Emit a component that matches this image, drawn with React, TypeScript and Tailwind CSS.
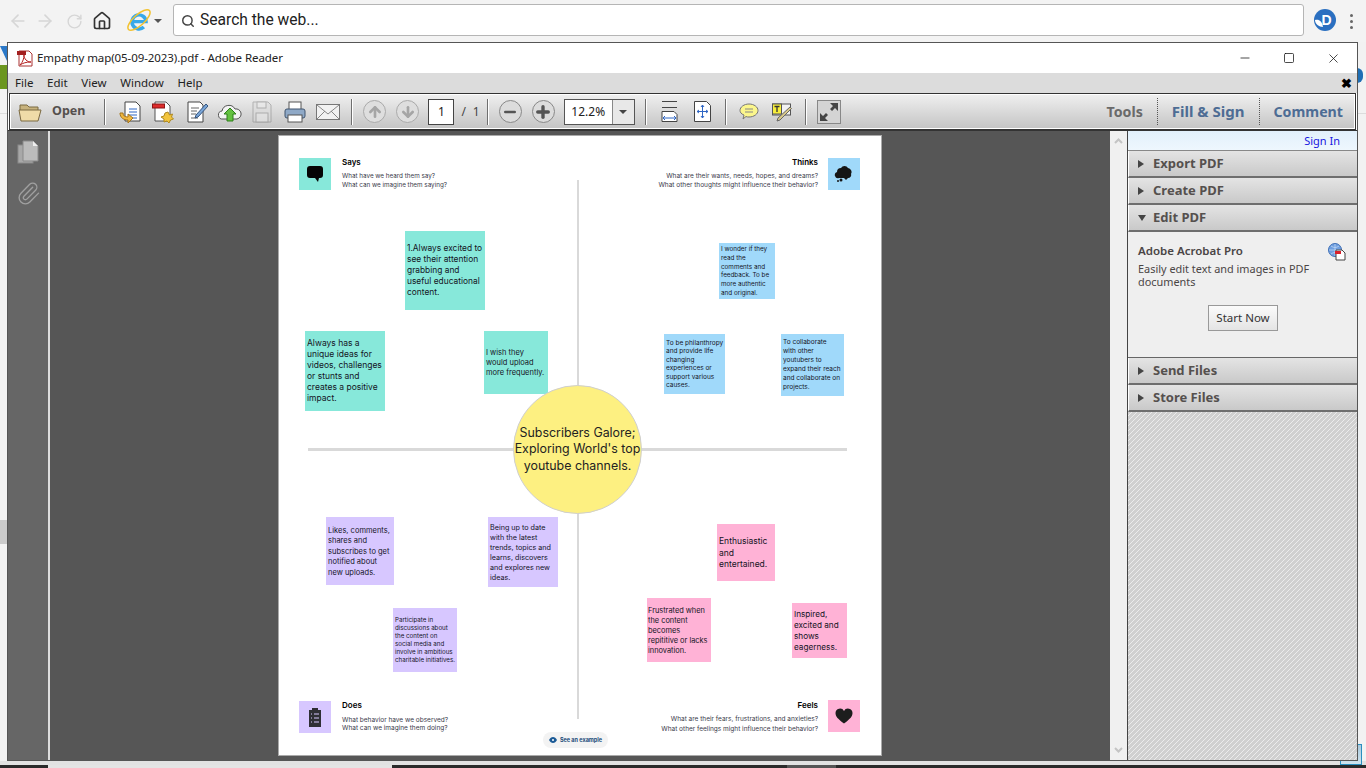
import { ArrowLeft, ArrowRight, RotateCw, Home, Search, Minus, Plus, ArrowUp, ArrowDown, Paperclip, X, Square } from "lucide-react"

const ui = "font-['Noto_Sans',sans-serif]"
const doc = "font-['Inter',sans-serif]"
const hdr = "bg-gradient-to-b from-[#e4e4e4] to-[#c9c9c9]"

const Sep = ({ cls }: { cls: string }) => <div className={`w-[2px] h-[26px] shrink-0 border-l border-[#6f6f6f] border-r-0 bg-white ${cls}`} />

const Note = ({ x, y, w, h, cls, text, pad }: { x: number, y: number, w: number, h: number, cls: string, text: string[], pad: string }) => (
    <div className={`absolute ${pad} ${cls} text-[#14141f] whitespace-nowrap`} style={{ left: x, top: y, width: w, height: h }}>
        {text.map(t => <div key={t}>{t}</div>)}
    </div>
)

const Header = ({ title, open }: { title: string, open?: boolean }) => (
    <div className={`h-[27px] shrink-0 flex items-center pl-[9px] border-b-2 border-[#6e6e6e] border-l border-l-white ${hdr}`}>
        {open
            ? <div className="w-0 h-0 border-l-[4px] border-r-[4px] border-t-[6px] border-l-transparent border-r-transparent border-t-[#444]" />
            : <div className="w-0 h-0 border-t-[4px] border-b-[4px] border-l-[6px] border-t-transparent border-b-transparent border-l-[#444]" />}
        <span className={`${open ? "ml-[7px]" : "ml-[9px]"} text-[13px] font-bold text-[#55504e]`}>{title}</span>
    </div>
)

const Toolbar = () => (
    <div className="h-[37px] shrink-0 mx-px flex items-center border border-[#333] outline outline-white -outline-offset-2 bg-gradient-to-b from-[#f0f0f0] to-[#c4c4c4] pl-[8px]">
        <svg width="24" height="20" viewBox="0 0 24 20" className="shrink-0">
            <path d="M2 3h7l2 2h9v4H2z" fill="#c7b27d" stroke="#7b6a42" />
            <path d="M1 8h22l-3 11H3z" fill="#efdca8" stroke="#7b6a42" />
        </svg>
        <span className="ml-[10px] text-[12.5px] font-bold text-[#55504e]">Open</span>
        <Sep cls="ml-[19px]" />
        <svg width="22" height="24" viewBox="0 0 22 24" className="ml-[13px] shrink-0">
            <path d="M6 2h11l4 4v15H6z" fill="#fff" stroke="#444" />
            <path d="M10 9h8M10 12h8M10 15h8M10 18h8" stroke="#2f66c4" />
            <path d="M1 13c0 5 4 7 8 7v3l5-5-5-4v3c-3 0-5-1-5-4z" fill="#f0b73e" stroke="#a5741a" />
        </svg>
        <svg width="22" height="24" viewBox="0 0 22 24" className="ml-[11px] shrink-0">
            <path d="M3 2h11l4 4v15H3z" fill="#fff" stroke="#555" />
            <rect x="0.500" y="4" width="12" height="4" fill="#dd2b2b" stroke="#8a1515" />
            <path d="M16 12l1.500 3 3-1-1 3 2 2-3 1-1.500 3-2-2-3 1 0-3-3-2 3-1 1-3z" fill="#f2c43d" stroke="#b08a20" />
        </svg>
        <svg width="21" height="24" viewBox="0 0 21 24" className="ml-[13px] shrink-0">
            <path d="M1 2h12l3 3v17H1z" fill="#fff" stroke="#444" />
            <path d="M4 8h8M4 11h6M4 14h5M4 18h7" stroke="#666" />
            <path d="M19 4l2 2-10 11-3 1 1-3z" fill="#7aa6d8" stroke="#36557e" />
        </svg>
        <svg width="25" height="24" viewBox="0 0 25 24" className="ml-[9px] shrink-0">
            <path d="M6 19a4 4 0 0 1-1-8 7 7 0 0 1 13-2 5 5 0 0 1 2 10z" fill="#f4f4f4" stroke="#555" />
            <path d="M13 8l6 6h-3v7h-6v-7H7z" fill="#63c140" stroke="#2e7f1b" />
        </svg>
        <svg width="20" height="22" viewBox="0 0 20 22" opacity="0.45" className="ml-[10px] shrink-0">
            <path d="M1 1h15l3 3v17H1z" fill="#ddd" stroke="#777" />
            <rect x="5" y="1" width="9" height="6" fill="#eee" stroke="#777" />
            <rect x="4" y="12" width="12" height="9" fill="#eee" stroke="#777" />
        </svg>
        <svg width="22" height="24" viewBox="0 0 22 24" className="ml-[12px] shrink-0">
            <rect x="5" y="2" width="12" height="8" fill="#fff" stroke="#555" />
            <rect x="1" y="9" width="20" height="9" rx="2" fill="#8fa9c7" stroke="#40556f" />
            <rect x="4" y="15" width="14" height="7" fill="#fff" stroke="#555" />
        </svg>
        <svg width="24" height="18" viewBox="0 0 24 18" className="ml-[10px] shrink-0">
            <rect x="0.500" y="1.500" width="23" height="15" fill="#f2f2f2" stroke="#777" />
            <path d="M1 2l11 9 11-9M1 16l8-8M23 16l-8-8" fill="none" stroke="#888" />
        </svg>
        <Sep cls="ml-[11px]" />
        <div className="ml-[10px] w-[23px] h-[23px] shrink-0 rounded-full border border-[#aaa] bg-[#dedede] flex items-center justify-center">
            <ArrowUp size={16} strokeWidth={4} className="text-[#a5a5a5]" />
        </div>
        <div className="ml-[10px] w-[23px] h-[23px] shrink-0 rounded-full border border-[#aaa] bg-[#dedede] flex items-center justify-center">
            <ArrowDown size={16} strokeWidth={4} className="text-[#a5a5a5]" />
        </div>
        <div className="ml-[9px] w-[26px] h-[26px] shrink-0 bg-white border border-[#444] text-center text-[12px] leading-[24px] text-[#222]">1</div>
        <span className="ml-[7px] text-[12px] text-[#444]">/</span>
        <span className="ml-[7px] text-[12px] text-[#444]">1</span>
        <Sep cls="ml-[7px]" />
        <div className="ml-[10px] w-[23px] h-[23px] shrink-0 rounded-full border border-[#888] bg-[#dcdcdc] flex items-center justify-center">
            <Minus size={16} strokeWidth={4} className="text-[#555]" />
        </div>
        <div className="ml-[10px] w-[23px] h-[23px] shrink-0 rounded-full border border-[#888] bg-[#dcdcdc] flex items-center justify-center">
            <Plus size={18} strokeWidth={4.5} className="text-[#555]" />
        </div>
        <div className="ml-[9px] w-[71px] h-[26px] shrink-0 bg-white border border-[#555] flex">
            <span className="w-[47px] text-center text-[12px] leading-[24px] text-[#222]">12.2%</span>
            <div className="flex-1 border-l border-[#888] bg-[#e8e8e8] flex items-center justify-center">
                <div className="w-0 h-0 border-l-[4px] border-r-[4px] border-t-[4px] border-l-transparent border-r-transparent border-t-[#444]" />
            </div>
        </div>
        <Sep cls="ml-[10px]" />
        <svg width="17" height="21" viewBox="0 0 17 21" className="ml-[14px] shrink-0">
            <rect x="1" y="0.500" width="15" height="6" fill="#e4e4e4" />
            <path d="M1 0.500h15M1 6.500h15" stroke="#444" fill="none" />
            <path d="M1 10.500h12l3 3v7H1z" fill="#fff" stroke="#444" />
            <path d="M2 17h13M4 15l-2 2 2 2M13 15l2 2-2 2" stroke="#2f66c4" fill="none" />
        </svg>
        <svg width="17" height="21" viewBox="0 0 17 21" className="ml-[16px] shrink-0">
            <path d="M0.500 0.500h12l4 4v16H0.500z" fill="#fff" stroke="#444" />
            <path d="M8.500 4v13M3 10.500h11M7 6l1.500-2 1.500 2M7 15l1.500 2 1.500-2M5 9l-2 1.500 2 1.500M12 9l2 1.500-2 1.500" stroke="#2f66c4" fill="none" />
        </svg>
        <Sep cls="ml-[14px]" />
        <svg width="20" height="18" viewBox="0 0 20 18" className="ml-[12px] shrink-0">
            <path d="M10 1c5 0 9 3 9 6.500S15 14 10 14c-1 0-2 0-3-.5L4 16l1-4C2 11 1 9 1 7.500 1 4 5 1 10 1z" fill="#fbf68c" stroke="#777" />
            <path d="M6 6h8M6 9h8" stroke="#888" />
        </svg>
        <svg width="20" height="20" viewBox="0 0 20 20" className="ml-[13px] shrink-0">
            <rect x="0.500" y="2" width="18" height="11" fill="#f2f2f2" stroke="#555" />
            <rect x="0.500" y="2" width="9" height="10" fill="#f7ee3b" stroke="#555" />
            <path d="M2.500 4.500h5M5 4.500v5.500" stroke="#333" strokeWidth="1.300" />
            <path d="M18 5l1.500 1.500L8 18l-3 1 1-3z" fill="#d8c98a" stroke="#666" />
        </svg>
        <Sep cls="ml-[13px]" />
        <div className="ml-[10px] w-[24px] h-[24px] shrink-0 bg-[#d4d4d4] border border-[#888] flex items-center justify-center">
            <svg width="20" height="20" viewBox="0 0 20 20">
                <path d="M19 1v8l-3-3-3 3-2-2 3-3-3-3z" fill="#444" />
                <path d="M1 19v-8l3 3 3-3 2 2-3 3 3 3z" fill="#444" />
            </svg>
        </div>
        <div className="ml-auto flex items-center h-full font-bold">
            <span className="text-[#6a6a6a] text-[14.2px] pr-[14px]">Tools</span>
            <div className="h-[27px] border-l border-dotted border-[#555]" />
            <span className="text-[#4d6c94] text-[15px] px-[14px]">Fill & Sign</span>
            <div className="h-[27px] border-l border-dotted border-[#555]" />
            <span className="text-[#4d6c94] text-[14.2px] pl-[14px] pr-[12px]">Comment</span>
        </div>
    </div>
)

const PdfPage = () => (
    <div className={`absolute left-[228px] top-[4px] w-[604px] h-[621px] bg-white border border-[#aaa] ${doc}`}>
        {/* page is a free canvas, offsets are relative to its top left */}
        <div className="absolute left-[298px] top-[44px] w-[2px] h-[539px] bg-[#d9d9d9]" />
        <div className="absolute left-[29px] top-[312px] w-[539px] h-[3px] bg-[#d9d9d9]" />

        <div className="absolute left-[20px] top-[22px] w-[32px] h-[32px] bg-[#87e8da] flex items-center justify-center">
            <svg width="18" height="18" viewBox="0 0 18 18"><path d="M4 1h10c2 0 3 1 3 3v6c0 2-1 3-3 3h-1l-1 4-3-4H4c-2 0-3-1-3-3V4c0-2 1-3 3-3z" fill="#050505" /></svg>
        </div>
        <div className="absolute left-[63px] top-[20px] text-[8px] font-semibold text-black">Says</div>
        <div className="absolute left-[63px] top-[36px] text-[6.3px] leading-[9px] text-[#3a3a4a] whitespace-nowrap">What have we heard them say?<br />What can we imagine them saying?</div>

        <div className="absolute right-[63px] top-[20px] text-[8px] font-semibold text-black">Thinks</div>
        <div className="absolute right-[63px] top-[36px] text-[6.5px] leading-[9px] text-[#3a3a4a] text-right whitespace-nowrap">What are their wants, needs, hopes, and dreams?<br />What other thoughts might influence their behavior?</div>
        <div className="absolute left-[549px] top-[22px] w-[32px] h-[32px] bg-[#a0d9fa] flex items-center justify-center">
            <svg width="20" height="20" viewBox="0 0 20 20"><path d="M5 14a3 3 0 0 1-2-6 4 4 0 0 1 4-4 4 4 0 0 1 7 0 4 4 0 0 1 3 6 3 3 0 0 1-3 4l-2 2-2-2z" fill="#151515" /><circle cx="4" cy="17" r="1" fill="#151515" /><circle cx="7" cy="16" r="1.500" fill="#151515" /></svg>
        </div>

        <div className="absolute left-[20px] top-[565px] w-[32px] h-[32px] bg-[#d7c7ff] flex items-center justify-center">
            <svg width="14" height="20" viewBox="0 0 14 20"><path d="M1 3h3V1h6v2h3v17H1z" fill="#2f2f35" /><path d="M3 7h1M6 7h5M3 11h1M6 11h5M3 15h1M6 15h5" stroke="#d7c7ff" /></svg>
        </div>
        <div className="absolute left-[63px] top-[563px] text-[8px] font-semibold text-black">Does</div>
        <div className="absolute left-[63px] top-[580px] text-[6.5px] leading-[8px] text-[#3a3a4a] whitespace-nowrap">What behavior have we observed?<br />What can we imagine them doing?</div>

        <div className="absolute right-[63px] top-[563px] text-[8px] font-semibold text-black">Feels</div>
        <div className="absolute right-[63px] top-[578px] text-[6.5px] leading-[10px] text-[#3a3a4a] text-right whitespace-nowrap">What are their fears, frustrations, and anxieties?<br />What other feelings might influence their behavior?</div>
        <div className="absolute left-[549px] top-[564px] w-[32px] h-[32px] bg-[#ffb2d6] flex items-center justify-center">
            <svg width="18" height="16" viewBox="0 0 18 16"><path d="M9 15.500C3 11 0.500 8.500 0.500 5A4.500 4.500 0 0 1 9 3a4.500 4.500 0 0 1 8.500 2c0 3.500-2.500 6-8.500 10.500z" fill="#1d1d1d" /></svg>
        </div>

        <Note x={126} y={95} w={80} h={79} cls="bg-[#87e8da] text-[8.4px] leading-[11px]" pad="pl-[2px] pt-[12px]" text={["1.Always excited to", "see their attention", "grabbing and", "useful educational", "content."]} />
        <Note x={26} y={195} w={80} h={80} cls="bg-[#87e8da] text-[8.5px] leading-[11px]" pad="pl-[2px] pt-[7px]" text={["Always has a", "unique ideas for", "videos, challenges", "or stunts and", "creates a positive", "impact."]} />
        <Note x={205} y={195} w={64} h={63} cls="bg-[#87e8da] text-[7.5px] leading-[10px]" pad="pl-[2px] pt-[17px]" text={["I wish they", "would upload", "more frequently."]} />

        <Note x={440} y={107} w={56} h={56} cls="bg-[#a0d9fa] text-[6.3px] leading-[8.8px]" pad="pl-[2px] pt-[2px]" text={["I wonder if they", "read the", "comments and", "feedback. To be", "more authentic", "and original."]} />
        <Note x={385} y={198} w={61} h={60} cls="bg-[#a0d9fa] text-[6.5px] leading-[8.4px]" pad="pl-[2px] pt-[5px]" text={["To be philanthropy", "and provide life", "changing", "experiences or", "support various", "causes."]} />
        <Note x={502} y={198} w={63} h={62} cls="bg-[#a0d9fa] text-[6.5px] leading-[9px]" pad="pl-[2px] pt-[4px]" text={["To collaborate", "with other", "youtubers to", "expand their reach", "and collaborate on", "projects."]} />

        <Note x={47} y={381} w={68} h={68} cls="bg-[#d7c7ff] text-[7.5px] leading-[10.4px]" pad="pl-[2px] pt-[9px]" text={["Likes, comments,", "shares and", "subscribes to get", "notified about", "new uploads."]} />
        <Note x={209} y={381} w={70} h={70} cls="bg-[#d7c7ff] text-[7.2px] leading-[10px]" pad="pl-[2px] pt-[6px]" text={["Being up to date", "with the latest", "trends, topics and", "learns, discovers", "and explores new", "ideas."]} />
        <Note x={114} y={472} w={64} h={64} cls="bg-[#d7c7ff] text-[6.2px] leading-[8.1px]" pad="pl-[2px] pt-[8px]" text={["Participate in", "discussions about", "the content on", "social media and", "involve in ambitious", "charitable initiatives."]} />

        <Note x={438} y={388} w={58} h={57} cls="bg-[#ffb2d6] text-[8.5px] leading-[11.5px]" pad="pl-[2px] pt-[12px]" text={["Enthusiastic", "and", "entertained."]} />
        <Note x={368} y={462} w={64} h={64} cls="bg-[#ffb2d6] text-[7.4px] leading-[9.9px]" pad="pl-[1px] pt-[8px]" text={["Frustrated when", "the content", "becomes", "repititive or lacks", "innovation."]} />
        <Note x={513} y={467} w={55} h={55} cls="bg-[#ffb2d6] text-[8.2px] leading-[11px]" pad="pl-[2px] pt-[6px]" text={["Inspired,", "excited and", "shows", "eagerness."]} />

        <div className="absolute left-[234px] top-[249px] w-[129px] h-[129px] rounded-full bg-[#fdf081] border border-[#cfcfcf] flex flex-col items-center justify-center text-[12.4px] leading-[16.5px] text-[#222] whitespace-nowrap">
            <div>Subscribers Galore;</div>
            <div>Exploring World's top</div>
            <div>youtube channels.</div>
        </div>

        <div className="absolute left-[264px] top-[596px] w-[65px] h-[16px] rounded-[8px] bg-[#f3f3f3] flex items-center justify-center gap-[3px] text-[5.5px] font-bold text-[#1b4b7a] whitespace-nowrap">
            <svg width="8" height="6" viewBox="0 0 8 6"><path d="M0 3c2-4 6-4 8 0-2 4-6 4-8 0z" fill="#1b5a96" /><circle cx="4" cy="3" r="1" fill="#fff" /></svg>
            See an example
        </div>
    </div>
)

const SidePanel = () => (
    <div className={`w-[230px] shrink-0 flex flex-col border-l border-[#444] ${ui}`}>
        <div className="h-[20px] shrink-0 bg-gradient-to-b from-[#e2f0fb] to-[#eef7fe] text-right pr-[17px] text-[11px] leading-[19px] text-[#1515e0] border-b border-[#888]">Sign In</div>
        <Header title="Export PDF" />
        <Header title="Create PDF" />
        <Header title="Edit PDF" open />
        <div className="h-[126px] shrink-0 bg-[#efefef] border-b border-[#666] pl-[10px] pr-[10px] relative">
            <div className="mt-[10px] text-[11.5px] font-semibold text-[#4a4545]">Adobe Acrobat Pro</div>
            <div className="mt-[3px] text-[10.9px] leading-[13px] text-[#4a4545]">Easily edit text and images in PDF<br />documents</div>
            <div className="absolute left-[80px] top-[73px] w-[70px] h-[26px] border border-[#999] bg-gradient-to-b from-[#fbfbfb] to-[#e4e4e4] text-center text-[11.5px] leading-[23px] text-[#333]">Start Now</div>
            <svg width="18" height="18" viewBox="0 0 18 18" className="absolute left-[200px] top-[11px]">
                <circle cx="7" cy="7" r="6.500" fill="#6f9fe0" stroke="#3f6fb5" />
                <path d="M1 7h12M7 1v12M3 3c3 2 5 2 8 0M3 11c3-2 5-2 8 0" stroke="#c9dcf5" strokeWidth="0.700" fill="none" />
                <path d="M8 7h6l3 3v7H8z" fill="#fff" stroke="#444" />
                <rect x="7" y="8" width="6" height="3" fill="#d9202a" />
            </svg>
        </div>
        <Header title="Send Files" />
        <Header title="Store Files" />
        <div className="flex-1 bg-[repeating-linear-gradient(135deg,#d0d0d0_0px,#d0d0d0_2.4px,#ececec_2.4px,#ececec_3.5355339px)]" />
    </div>
)

export default function App() {
    return (
        <div className="relative w-[1366px] h-[768px] overflow-hidden bg-[#f2f2f2]">
            {/* browser chrome behind the reader window */}
            <div className="h-[42px] flex items-center pl-[8px] bg-[#f3f3f3]">
                <ArrowLeft size={20} className="text-[#d6d6d6] shrink-0" />
                <ArrowRight size={20} className="text-[#d6d6d6] ml-[7px] shrink-0" />
                <RotateCw size={17} className="text-[#d6d6d6] ml-[11px] shrink-0" />
                <Home size={20} className="text-[#333] ml-[9px] shrink-0" />
                <svg width="26" height="26" viewBox="0 0 24 24" className="ml-[14px] mb-[2px] shrink-0">
                    <path d="M6.500 13.500h12a6.500 6.500 0 1 0-2 5" fill="none" stroke="#37a8ea" strokeWidth="3.200" />
                    <ellipse cx="12" cy="12" rx="13" ry="5" transform="rotate(-42 12 12)" fill="none" stroke="#f2c230" strokeWidth="1.400" />
                </svg>
                <div className="w-0 h-0 ml-[2px] shrink-0 border-l-[4px] border-r-[4px] border-t-[4px] border-l-transparent border-r-transparent border-t-[#555]" />
                <div className="ml-[11px] mb-[2px] w-[1131px] h-[32px] shrink-0 bg-white border border-[#b5b5b5] rounded-[3px] flex items-center pl-[7px] pt-[1px] font-['Roboto',sans-serif] text-[15.6px] text-[#222]">
                    <Search size={14} strokeWidth={2.5} className="text-[#444]" />
                    <span className="ml-[5px]">Search the web...</span>
                </div>
                <svg width="22" height="22" viewBox="0 0 22 22" className="ml-[10px] mb-[2px] shrink-0">
                    <circle cx="11" cy="11" r="11" fill="#2a6fc0" />
                    <path d="M1 11c4-1 7 1 8 7-4 0-8-3-8-7z" fill="#fff" />
                    <text x="12.5" y="16" textAnchor="middle" fontSize="14" fontWeight="700" fill="#fff" fontFamily="Liberation Sans, sans-serif">D</text>
                </svg>
                <div className="ml-[14px] flex flex-col gap-[3px]">
                    <div className="w-[3px] h-[3px] rounded-full bg-[#666]" />
                    <div className="w-[3px] h-[3px] rounded-full bg-[#666]" />
                    <div className="w-[3px] h-[3px] rounded-full bg-[#666]" />
                </div>
            </div>

            {/* bits of the page under the window */}
            <svg width="7" height="18" viewBox="0 0 7 18" className="absolute left-0 top-[43px]"><path d="M0 3h7v15z" fill="#2a78c8" /></svg>
            <div className="absolute left-0 top-[65px] w-[8px] h-[24px] bg-[#6b961f]" />
            <div className="absolute left-0 top-[113px] w-[8px] h-px bg-[#dcdcdc]" />
            <div className="absolute left-0 top-[520px] w-[8px] h-[24px] bg-[#cacaca]" />
            <div className="absolute left-[1357px] top-[68px] w-[6px] h-[15px] rounded-r-full bg-[#1f6fb5]" />
            <div className="absolute left-[1357px] top-[113px] w-[9px] h-px bg-[#dcdcdc]" />
            <div className="absolute left-0 top-[761px] w-[1366px] h-[4px] bg-[#e2e2e2]" />
            <div className="absolute left-[1340px] top-[744px] w-[22px] h-[21px] border border-[#2a8fc0] bg-gradient-to-b from-[#a9c9dc] to-[#cfe3ee]" />
            <div className="absolute left-0 top-[765px] w-[1366px] h-[3px] bg-[#2a2a2a]" />
            <div className="absolute left-[48px] top-[765px] w-[344px] h-[3px] bg-[#e4e4e4]" />
            <div className="absolute left-[787px] top-[765px] w-[49px] h-[3px] bg-[#555]" />

            {/* reader window */}
            <div className={`absolute left-[7px] top-[42px] w-[1351px] h-[719px] flex flex-col bg-white border border-[#555] ${ui}`}>
                <div className="h-[30px] shrink-0 flex items-center pl-[8px] bg-white">
                    <svg width="17" height="17" viewBox="0 0 17 17">
                        <path d="M3 1h10l3 3v12H3z" fill="#fff" stroke="#a33" />
                        <rect x="1" y="1" width="9" height="4" fill="#a32020" />
                        <path d="M4 15c3-3 4-7 4-10 0 4 3 7 7 7-5 0-8 1-11 3z" fill="none" stroke="#b52020" />
                    </svg>
                    <span className="ml-[4px] text-[11.5px] tracking-[-0.08px] text-[#222]">Empathy map(05-09-2023).pdf - Adobe Reader</span>
                    <div className="ml-auto flex items-center pr-[16px]">
                        <Minus size={14} strokeWidth={1.3} className="text-[#111]" />
                        <Square size={12} strokeWidth={1.5} className="text-[#111] ml-[31px]" />
                        <X size={15} strokeWidth={1.2} className="text-[#111] ml-[31px]" />
                    </div>
                </div>
                <div className="h-[20px] shrink-0 flex items-center bg-[#dcdcdc] pl-[7px] gap-[13.7px] text-[11.5px] text-[#222]">
                    <span>File</span><span>Edit</span><span>View</span><span>Window</span><span>Help</span>
                    <span className="ml-auto pr-[5px] font-bold text-[13px] leading-none text-black">✖</span>
                </div>
                <Toolbar />
                <div className="flex-1 min-h-0 flex border-t border-[#333]">
                    <div className="w-[42px] shrink-0 bg-[#666] border-r-2 border-[#ddd] flex flex-col items-center pt-[9px] gap-[17px]">
                        <svg width="22" height="24" viewBox="0 0 22 24">
                            <rect x="1" y="5" width="15" height="18" fill="#a8a8a8" stroke="#8a8a8a" />
                            <path d="M6 1h10l5 5v15H6z" fill="#bcbcbc" stroke="#8a8a8a" />
                            <path d="M16 1v5h5z" fill="#eee" />
                        </svg>
                        <Paperclip size={25} strokeWidth={1.3} className="text-[#a0a0a0]" />
                    </div>
                    <div className="flex-1 relative bg-[#565656]">
                        <PdfPage />
                    </div>
                    <div className="w-[17px] shrink-0 bg-[#f0f0f0] flex flex-col items-center justify-between text-[#c4c4c4] py-[7px]">
                        <svg width="9" height="6" viewBox="0 0 9 6"><path d="M1 5l3.500-3.500L8 5" fill="none" stroke="currentColor" strokeWidth="2" /></svg>
                        <svg width="9" height="6" viewBox="0 0 9 6"><path d="M1 1l3.500 3.500L8 1" fill="none" stroke="currentColor" strokeWidth="2" /></svg>
                    </div>
                    <SidePanel />
                </div>
            </div>
        </div>
    )
}
